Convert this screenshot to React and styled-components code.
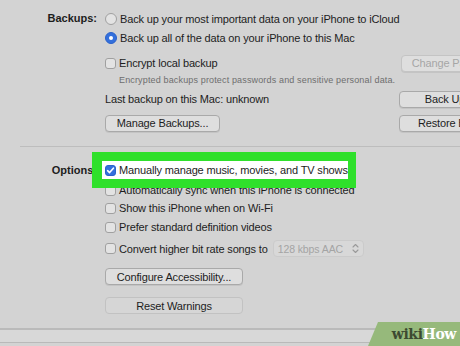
import React from "react";
import styled, { createGlobalStyle } from "styled-components";

const Global = createGlobalStyle`
  html, body { margin: 0; padding: 0; background: #d3d3d3; }
  body { font-family: "Liberation Sans", Arial, sans-serif; -webkit-font-smoothing: antialiased; }
`;

const Frame = styled.div`
  position: relative;
  width: 460px;
  height: 346px;
  overflow: hidden;
  background: #d3d3d3;
  color: #1d1d1d;
`;

const Sheet = styled.div`
  width: 520px;
  display: flex;
  flex-direction: column;
`;

const Section = styled.section`
  display: grid;
  grid-template-columns: 97px 1fr;
  column-gap: 8px;
  align-items: start;
  padding-top: ${(p) => p.$top}px;
`;

const Label = styled.div`
  font-weight: bold;
  font-size: 11px;
  text-align: right;
  height: ${(p) => p.$h}px;
  line-height: ${(p) => p.$h}px;
  white-space: nowrap;
`;

const Rows = styled.div`
  display: flex;
  flex-direction: column;
  align-items: flex-start;
`;

const Row = styled.div`
  display: flex;
  align-items: center;
  height: ${(p) => p.$h || 18}px;
  margin-top: ${(p) => p.$mt || 0}px;
  font-size: 11px;
  letter-spacing: -0.15px;
  white-space: nowrap;
`;

const LeftPart = styled.div`
  display: flex;
  align-items: center;
  width: 294px;
  flex: none;
`;

const Highlight = styled(Row)`
  position: relative;
  z-index: 2;
  margin-left: -3px;
  padding-left: 3px;
  width: 246px;
  box-sizing: border-box;
  background: #ffffff;
  box-shadow: -1px 0 0 9px #2fe02b;
`;

const Radio = styled.span`
  flex: none;
  box-sizing: border-box;
  width: 12px;
  height: 12px;
  margin-right: 3px;
  border-radius: 50%;
  border: 1px solid ${(p) => (p.$on ? "#2a62cc" : "#a0a0a0")};
  background: ${(p) => (p.$on ? "#3470dc" : "#e3e3e3")};
  display: flex;
  align-items: center;
  justify-content: center;
  &::after {
    content: "";
    display: ${(p) => (p.$on ? "block" : "none")};
    width: 4px;
    height: 4px;
    border-radius: 50%;
    background: #ffffff;
  }
`;

const Box = styled.span`
  flex: none;
  box-sizing: border-box;
  width: 11px;
  height: 11px;
  margin-right: 3px;
  border-radius: 3px;
  border: 1px solid ${(p) => (p.$on ? "#2a62cc" : "#a0a0a0")};
  background: ${(p) => (p.$on ? "#3470dc" : "#e3e3e3")};
  display: flex;
  align-items: center;
  justify-content: center;
`;

const Note = styled.div`
  font-size: 9px;
  color: #6e6e6e;
  margin-left: 14px;
  letter-spacing: 0.15px;
`;

const Button = styled.div`
  flex: none;
  box-sizing: border-box;
  width: ${(p) => p.$w}px;
  height: 17px;
  border-radius: 4px;
  border: 1px solid ${(p) => (p.$disabled ? "#c4c4c4" : p.$flat ? "#c2c2c2" : "#a9a9a9")};
  background: ${(p) => (p.$flat ? "#d6d6d6" : "#dedede")};
  box-shadow: ${(p) => (p.$flat ? "none" : "0 1px 0 rgba(0,0,0,0.07)")};
  color: ${(p) => (p.$disabled ? "#a6a6a6" : "#1d1d1d")};
  font-size: 11px;
  display: flex;
  align-items: center;
  justify-content: center;
  white-space: nowrap;
`;

const Select = styled.div`
  margin-left: 5px;
  box-sizing: border-box;
  width: 91px;
  height: 17px;
  padding: 0 4px 0 4px;
  border-radius: 4px;
  border: 1px solid #cbcbcb;
  background: #d8d8d8;
  color: #a4a4a4;
  font-size: 10.5px;
  letter-spacing: -0.1px;
  display: flex;
  align-items: center;
  justify-content: space-between;
`;

const Separator = styled.div`
  height: 1px;
  margin: ${(p) => p.$mt}px 0 0 20px;
  background: #bdbdbd;
`;

const BottomBar = styled.div`
  margin-top: 14px;
  height: 12px;
  border-top: 2px solid #bababa;
  border-bottom: 1px solid #b9b9b9;
  background: #d8d8d8;
`;

const Badge = styled.div`
  position: absolute;
  right: 0;
  bottom: 0;
  width: 92px;
  height: 24px;
  background: #96b97b;
  clip-path: polygon(10px 0, 100% 0, 100% 100%, 0 100%);
  display: flex;
  align-items: center;
  justify-content: flex-end;
  padding-right: 4px;
  box-sizing: border-box;
  font-family: "DejaVu Serif", "Liberation Serif", serif;
  font-weight: bold;
  font-size: 14px;
  letter-spacing: -0.4px;
`;

const Wiki = styled.span`
  color: #3c4a31;
`;
const How = styled.span`
  color: #ffffff;
`;

const Check = () => (
  <svg width="9" height="9" viewBox="0 0 9 9">
    <path d="M1.6 4.7 L3.6 6.6 L7.4 2.2" fill="none" stroke="#fff" strokeWidth="1.6" strokeLinecap="round" strokeLinejoin="round" />
  </svg>
);

const Chevrons = () => (
  <svg width="7" height="11" viewBox="0 0 7 11">
    <path d="M1 4 L3.5 1.5 L6 4 M1 7 L3.5 9.5 L6 7" fill="none" stroke="#9a9a9a" strokeWidth="1.1" strokeLinecap="round" strokeLinejoin="round" />
  </svg>
);

export default function App() {
  return (
    <>
      <Global />
      <Frame>
        <Sheet>
          <Section $top={9}>
            <Label $h={19}>Backups:</Label>
            <Rows>
              <Row $h={19}>
                <Radio />
                Back up your most important data on your iPhone to iCloud
              </Row>
              <Row $h={19}>
                <Radio $on />
                Back up all of the data on your iPhone to this Mac
              </Row>
              <Row $mt={7}>
                <LeftPart>
                  <Box />
                  Encrypt local backup
                </LeftPart>
                <Button $w={118} $disabled style={{ marginLeft: 2 }}>Change Password...</Button>
              </Row>
              <Row $h={14} $mt={1}>
                <Note>Encrypted backups protect passwords and sensitive personal data.</Note>
              </Row>
              <Row $mt={3}>
                <LeftPart>Last backup on this Mac: unknown</LeftPart>
                <Button $w={92}>Back Up</Button>
              </Row>
              <Row $mt={6}>
                <LeftPart>
                  <Button $w={115}>Manage Backups...</Button>
                </LeftPart>
                <Button $w={114}>Restore Backup</Button>
              </Row>
            </Rows>
          </Section>

          <Separator $mt={14} />

          <Section $top={14}>
            <Label $h={18}>Options:</Label>
            <Rows>
              <Highlight>
                <Box $on>
                  <Check />
                </Box>
                Manually manage music, movies, and TV shows
              </Highlight>
              <Row $mt={2}>
                <Box />
                Automatically sync when this iPhone is connected
              </Row>
              <Row>
                <Box />
                Show this iPhone when on Wi-Fi
              </Row>
              <Row $mt={1}>
                <Box />
                Prefer standard definition videos
              </Row>
              <Row $h={17} $mt={4}>
                <Box />
                Convert higher bit rate songs to
                <Select>
                  <span>128 kbps AAC</span>
                  <Chevrons />
                </Select>
              </Row>
              <Row $h={17} $mt={11}>
                <Button $w={138}>Configure Accessibility...</Button>
              </Row>
              <Row $h={17} $mt={12}>
                <Button $w={138} $flat>Reset Warnings</Button>
              </Row>
            </Rows>
          </Section>

          <BottomBar />
        </Sheet>
        <Badge>
          <Wiki>wiki</Wiki>
          <How>How</How>
        </Badge>
      </Frame>
    </>
  );
}
